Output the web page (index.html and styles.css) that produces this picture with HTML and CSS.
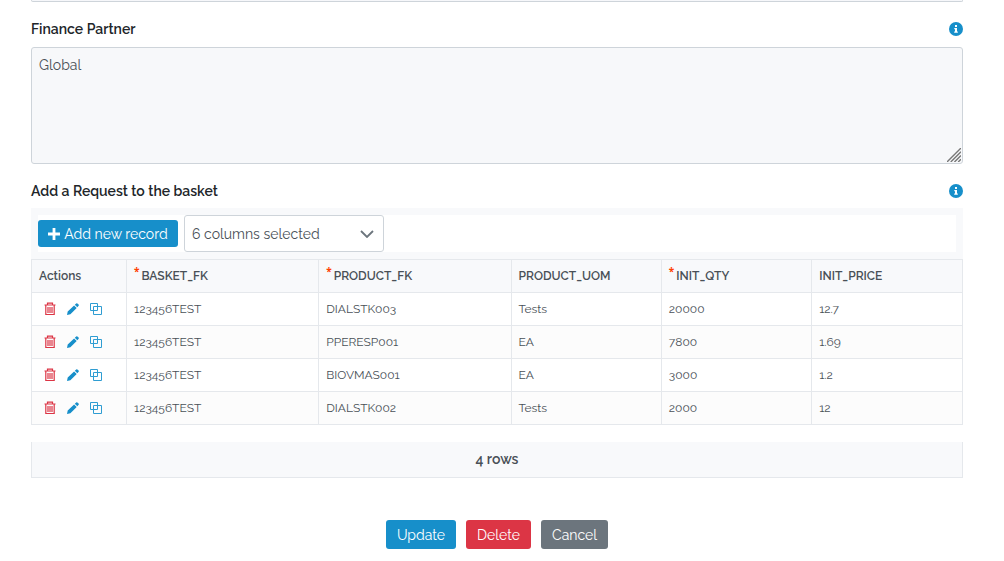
FILE: index.html
```
<!DOCTYPE html>
<html lang="en">
<head>
<meta charset="utf-8">
<title>Edit basket</title>
<link rel="stylesheet" href="styles.css">
</head>
<body>
<svg class="sprite" aria-hidden="true">
  <symbol id="info" viewBox="0 0 14 14"><circle cx="7" cy="7" r="7" fill="#178fca"/><path d="M6 3h2v2H6zM5.3 6H8v3.4h.8v1.3H5.2V9.400H6V7.200h-.7z" fill="#fff"/></symbol>
  <symbol id="trash" viewBox="0 0 12 14"><path d="M.5 3h11M3.500 3V1.200h5V3M1.800 3.300v9.200h8.400V3.300M4 5v6M6 5v6M8 5v6" fill="none" stroke="#dc3545" stroke-width="1.200"/></symbol>
  <symbol id="pencil" viewBox="0 0 12 12"><path d="M0 12l.7-3.500 6.400-6.100 2.600 2.600L3.400 11.300zM7.800 1.700L9.200.4q.6-.5 1.200 0l1.200 1.200q.5.6 0 1.200l-1.300 1.400z" fill="#178fca"/></symbol>
  <symbol id="copy" viewBox="0 0 12 12"><path d="M.5.5h7v7h-7zM3.500 3.500h8v8h-8z" fill="none" stroke="#2f9dd2"/></symbol>
</svg>
<main class="page">
  <div class="previous-field"></div>
  <div class="field-head">
    <label for="partner">Finance Partner</label>
    <svg class="info" role="img" aria-label="Information"><use href="#info"/></svg>
  </div>
  <div class="textarea-wrap">
    <textarea id="partner" class="textarea" readonly>Global</textarea>
    <svg class="grip" viewBox="0 0 15 15" aria-hidden="true"><path d="M0 15L15 0M4 15L15 4M8 15l7-7M12 15l3-3" stroke="#777" stroke-width="1.500" fill="none"/></svg>
  </div>
  <div class="field-head second">
    <label for="columns">Add a Request to the basket</label>
    <svg class="info" role="img" aria-label="Information"><use href="#info"/></svg>
  </div>
  <section class="grid">
    <div class="toolbar">
      <div class="toolbar-inner">
        <button class="btn add" type="button"><svg class="plus" viewBox="0 0 12 12" aria-hidden="true"><path d="M6 0v12M0 6h12" stroke="#fff" stroke-width="2.800"/></svg>Add new record</button>
        <div class="select-wrap">
          <select id="columns" class="select"><option>6 columns selected</option></select>
          <svg class="chevron" viewBox="0 0 14 8" aria-hidden="true"><path d="M1 1l6 6 6-6" fill="none" stroke="#6c757d" stroke-width="1.800"/></svg>
        </div>
      </div>
    </div>
    <table class="table">
      <colgroup><col class="c-actions"><col class="c-key"><col class="c-key"><col class="c-value"><col class="c-value"><col></colgroup>
      <thead><tr><th>Actions</th><th><span class="req">*</span>BASKET_FK</th><th><span class="req">*</span>PRODUCT_FK</th><th>PRODUCT_UOM</th><th><span class="req">*</span>INIT_QTY</th><th>INIT_PRICE</th></tr></thead>
      <tbody>
        <tr><td><div class="actions"><button type="button" aria-label="Delete"><svg class="trash"><use href="#trash"/></svg></button><button type="button" aria-label="Edit"><svg class="icon"><use href="#pencil"/></svg></button><button type="button" aria-label="Copy"><svg class="icon"><use href="#copy"/></svg></button></div></td><td>123456TEST</td><td>DIALSTK003</td><td>Tests</td><td>20000</td><td>12.7</td></tr>
        <tr><td><div class="actions"><button type="button" aria-label="Delete"><svg class="trash"><use href="#trash"/></svg></button><button type="button" aria-label="Edit"><svg class="icon"><use href="#pencil"/></svg></button><button type="button" aria-label="Copy"><svg class="icon"><use href="#copy"/></svg></button></div></td><td>123456TEST</td><td>PPERESP001</td><td>EA</td><td>7800</td><td>1.69</td></tr>
        <tr><td><div class="actions"><button type="button" aria-label="Delete"><svg class="trash"><use href="#trash"/></svg></button><button type="button" aria-label="Edit"><svg class="icon"><use href="#pencil"/></svg></button><button type="button" aria-label="Copy"><svg class="icon"><use href="#copy"/></svg></button></div></td><td>123456TEST</td><td>BIOVMAS001</td><td>EA</td><td>3000</td><td>1.2</td></tr>
        <tr><td><div class="actions"><button type="button" aria-label="Delete"><svg class="trash"><use href="#trash"/></svg></button><button type="button" aria-label="Edit"><svg class="icon"><use href="#pencil"/></svg></button><button type="button" aria-label="Copy"><svg class="icon"><use href="#copy"/></svg></button></div></td><td>123456TEST</td><td>DIALSTK002</td><td>Tests</td><td>2000</td><td>12</td></tr>
      </tbody>
    </table>
    <div class="summary">4 rows</div>
  </section>
  <div class="form-actions">
    <button class="btn" type="submit">Update</button>
    <button class="btn danger" type="button">Delete</button>
    <button class="btn neutral" type="button">Cancel</button>
  </div>
</main>
</body>
</html>
```
FILE: styles.css
```
* { box-sizing: border-box; }
body {
  margin: 0;
  background: #fff;
  color: #495057;
  font-family: Raleway, Lato, "Open Sans", sans-serif;
  font-size: 14px;
}
button, select, textarea { font: inherit; }
svg { display: block; }
.sprite { position: absolute; width: 0; height: 0; }
.page { padding: 0 41px 12px 31px; }
.previous-field {
  height: 2px;
  background: #f6f7fa;
  border: 1px solid #ced4da;
  border-top: 0;
  border-radius: 0 0 3px 3px;
}
.field-head {
  display: flex;
  align-items: center;
  justify-content: space-between;
  height: 20px;
  margin: 17px 0 8px;
  color: #212529;
  font-weight: 600;
}
.field-head.second { margin: 17px 0 7px; }
.info { width: 14px; height: 14px; }
.textarea-wrap { position: relative; }
.textarea {
  display: block;
  width: 100%;
  height: 117px;
  padding: 7px;
  border: 1px solid #ced4da;
  border-radius: 3px;
  background: #f7f8fa;
  color: #495057;
  line-height: 20px;
  resize: none;
  outline: 0;
}
.grip { position: absolute; right: 2px; bottom: 2px; width: 14px; height: 14px; }
.toolbar { padding: 7px; background: #f8f9fb; }
.toolbar-inner { display: flex; align-items: center; gap: 6px; background: #fff; }
.btn {
  height: 29px;
  padding: 0 11px;
  border: 0;
  border-radius: 3px;
  background: #178fca;
  color: #fff;
}
.btn.add {
  display: flex;
  align-items: center;
  justify-content: center;
  gap: 4px;
  width: 140px;
  height: 27px;
  padding: 0;
}
.plus { width: 12px; height: 12px; }
.btn.danger { background: #dc3545; }
.btn.neutral { background: #6c757d; }
.select-wrap { position: relative; width: 200px; }
.select {
  display: block;
  appearance: none;
  width: 100%;
  height: 37px;
  padding: 0 7px;
  border: 1px solid #ced4da;
  border-radius: 3px;
  background: #fff;
  color: #495057;
}
.chevron { position: absolute; right: 10px; top: 15px; width: 14px; height: 8px; pointer-events: none; }
.table {
  width: 100%;
  table-layout: fixed;
  border-collapse: collapse;
  font-size: 12px;
  line-height: 16px;
}
.c-actions { width: 95px; }
.c-key { width: 20.65%; }
.c-value { width: 16.15%; }
.table th, .table td {
  height: 33px;
  padding: 0 7px;
  border: 1px solid #e5e8ec;
  text-align: left;
}
.table th { background: #f8f9fb; font-weight: 600; }
.table tbody tr:nth-child(even) { background: #fcfcfc; }
.req { margin-right: 2px; color: #ff4000; font-family: "Open Sans", sans-serif; font-weight: 700; font-size: 10px; line-height: 0; vertical-align: 5px; }
.actions { display: flex; align-items: center; gap: 11px; padding-left: 5px; }
.actions button { padding: 0 0 1px; border: 0; background: none; }
.trash { width: 12px; height: 14px; }
.icon { width: 12px; height: 12px; }
.summary {
  margin-top: 17px;
  padding: 8px;
  border: 1px solid #e5e8ec;
  border-top: 0;
  background: #f8f9fb;
  font-weight: 600;
  line-height: 19px;
  text-align: center;
}
.form-actions { display: flex; justify-content: center; gap: 10px; margin-top: 42px; }
```
